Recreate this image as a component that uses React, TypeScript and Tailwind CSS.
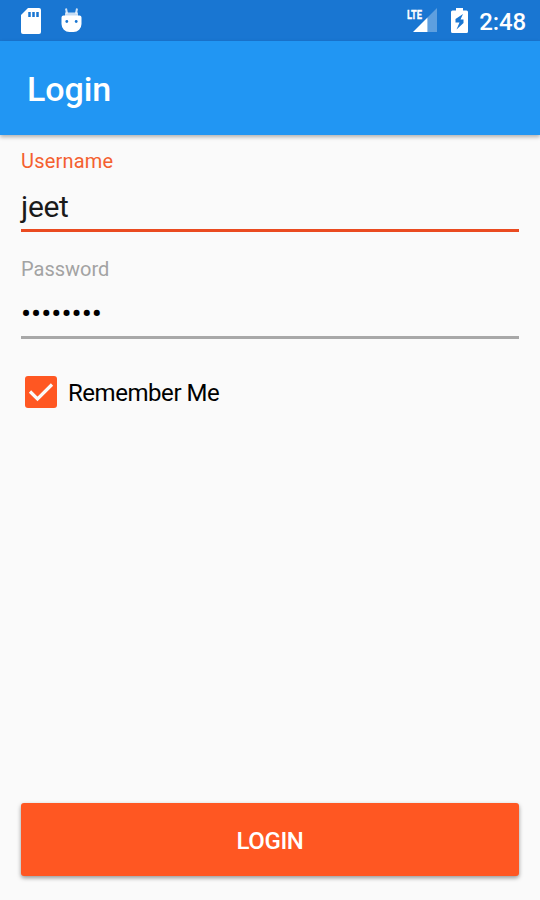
function SdCardIcon() {
  return (
    <svg width="20" height="26" viewBox="0 0 20 26" fill="none">
      <path d="M7 0h11a2 2 0 0 1 2 2v22a2 2 0 0 1-2 2H2a2 2 0 0 1-2-2V7z" fill="#fff" />
      <path d="M8.500 4v5M12.500 4v5M16.500 4v5" stroke="#1976d2" strokeWidth="2.500" />
    </svg>
  );
}

function AndroidIcon() {
  return (
    <svg width="21" height="25" viewBox="0 0 21 25">
      <path d="M5 0.500l1 5M16 0.500l-1 5" stroke="#fff" strokeOpacity="0.800" strokeWidth="2" />
      <path d="M4 4.500h13v4H4z" fill="#fff" opacity="0.750" />
      <path d="M2.500 7.500h16a2 2 0 0 1 2 2V16a8 8 0 0 1-8 8h-4a8 8 0 0 1-8-8V9.500a2 2 0 0 1 2-2z" fill="#fff" />
      <circle cx="5.800" cy="13.500" r="1.400" fill="#1976d2" />
      <circle cx="15.200" cy="13.500" r="1.400" fill="#1976d2" />
    </svg>
  );
}

function SignalIcon() {
  return (
    <svg width="31" height="25" viewBox="0 0 31 25">
      <path d="M31 0v24h-9.500V9.500z" fill="#fff" opacity="0.300" />
      <path d="M21.500 9.500V24H7z" fill="#fff" />
      <text x="1" y="11" fill="#fff" stroke="#fff" strokeWidth="0.300" fontFamily="Roboto" fontSize="13" fontWeight="700" textLength="15" lengthAdjust="spacingAndGlyphs">
        LTE
      </text>
    </svg>
  );
}

function BatteryIcon() {
  return (
    <svg width="17" height="25" viewBox="0 0 17 25">
      <path d="M5 0h7v2.500h3.500a1.500 1.500 0 0 1 1.500 1.500v19.500a1.500 1.500 0 0 1-1.500 1.500h-14A1.500 1.500 0 0 1 0 23.500V4a1.500 1.500 0 0 1 1.500-1.500H5z" fill="#fff" />
      <path d="M12 6L4.500 11v3.500h4L5.500 21.500 12.500 15v-3.500h-3z" fill="#1976d2" />
    </svg>
  );
}

function StatusBar() {
  return (
    <div className="flex h-[41px] items-center justify-between bg-[#1976d2] pr-[14px] pl-[21px]">
      <div className="flex items-center gap-5">
        <SdCardIcon />
        <AndroidIcon />
      </div>
      <div className="flex items-center">
        <SignalIcon />
        <div className="ml-[14px]">
          <BatteryIcon />
        </div>
        <span className="mt-0.5 ml-[11px] text-[24px] leading-none font-medium tracking-[-0.1px] text-white">2:48</span>
      </div>
    </div>
  );
}

export default function App() {
  return (
    <div className="flex h-[900px] w-[540px] flex-col overflow-hidden bg-[#fafafa] font-['Roboto',sans-serif]">
      <StatusBar />
      <header className="flex h-[94px] items-center bg-[#2196f3] px-[27px] pt-0.5 shadow-[0_2px_4px_rgba(0,0,0,0.3)]">
        <h1 className="text-[34px] font-medium tracking-[-0.1px] text-white">Login</h1>
      </header>

      <main className="flex flex-1 flex-col px-[21px] pb-[24px]">
        <div className="h-[97px] border-b-[3px] border-[#ea4a20] pt-[14px]">
          <div className="text-[20px] leading-6 tracking-[0.2px] text-[#f4602f]">Username</div>
          <div className="mt-4 text-[30px] leading-9 tracking-[-0.3px] text-[#1a1a1a]">jeet</div>
        </div>
        <div className="h-[107px] border-b-[3px] border-[#a8a8a8] pt-[25px]">
          <div className="text-[20px] leading-6 text-[#a3a3a3]">Password</div>
          <div className="mt-[15px] text-[30px] leading-9 text-black">••••••••</div>
        </div>

        <label className="mt-9 flex items-center pl-1">
          <span className="flex h-8 w-8 items-center justify-center rounded-[3px] bg-[#ff5722]">
            <svg width="26" height="22" viewBox="0 0 26 22" fill="none">
              <path d="M2 10.500l7.500 7.500L24 3.500" stroke="#fafafa" strokeWidth="3.200" />
            </svg>
          </span>
          <span className="mt-0.5 ml-[11px] text-[24px] leading-8 tracking-[-0.45px] text-black">Remember Me</span>
        </label>

        <button className="mt-auto h-[73px] rounded-[3px] bg-[#ff5722] pt-0.5 text-[24px] font-medium tracking-[-0.4px] text-white shadow-[0_2px_4px_rgba(0,0,0,0.4)]">
          LOGIN
        </button>
      </main>
    </div>
  );
}
